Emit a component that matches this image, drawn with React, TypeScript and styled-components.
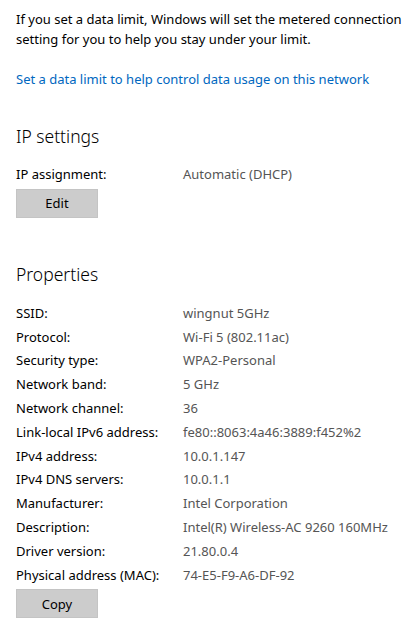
import React from "react";
import styled, { createGlobalStyle } from "styled-components";

const GlobalStyle = createGlobalStyle`
  html, body {
    margin: 0;
    padding: 0;
    background: #fff;
  }
  body {
    font-family: "Noto Sans", "Open Sans", sans-serif;
    color: #000;
    -webkit-font-smoothing: antialiased;
  }
`;

const Page = styled.div`
  padding: 9px 16px 20px;
  display: flex;
  flex-direction: column;
  align-items: flex-start;
`;

const Intro = styled.p`
  margin: 0;
  font-size: 13px;
  line-height: 20px;
`;

const Link = styled.a`
  margin-top: 20px;
  font-size: 13px;
  line-height: 20px;
  color: #0067c0;
  text-decoration: none;
  cursor: pointer;
`;

const Heading = styled.h2<{ $top: number }>`
  margin: ${(p) => p.$top}px 0 0;
  font-size: 17.5px;
  line-height: 28px;
  font-weight: 300;
`;

const List = styled.div<{ $top: number }>`
  margin-top: ${(p) => p.$top}px;
  display: flex;
  flex-direction: column;
  align-self: stretch;
`;

const Row = styled.div`
  display: grid;
  grid-template-columns: 167px 1fr;
  font-size: 13px;
  line-height: 23.8px;
  white-space: nowrap;
`;

const Label = styled.span`
  color: #000;
`;

const Value = styled.span`
  color: #555;
`;

const Button = styled.button`
  margin-top: 2px;
  width: 82px;
  height: 29px;
  background: #cccccc;
  border: 1px solid #c4c4c4;
  border-radius: 0;
  font-family: inherit;
  font-size: 13px;
  color: #000;
  padding: 0;
  cursor: pointer;
`;

const properties: [string, string][] = [
  ["SSID:", "wingnut 5GHz"],
  ["Protocol:", "Wi-Fi 5 (802.11ac)"],
  ["Security type:", "WPA2-Personal"],
  ["Network band:", "5 GHz"],
  ["Network channel:", "36"],
  ["Link-local IPv6 address:", "fe80::8063:4a46:3889:f452%2"],
  ["IPv4 address:", "10.0.1.147"],
  ["IPv4 DNS servers:", "10.0.1.1"],
  ["Manufacturer:", "Intel Corporation"],
  ["Description:", "Intel(R) Wireless-AC 9260 160MHz"],
  ["Driver version:", "21.80.0.4"],
  ["Physical address (MAC):", "74-E5-F9-A6-DF-92"],
];

const App = () => {
  return (
    <>
      <GlobalStyle />
      <Page>
        <Intro>
          If you set a data limit, Windows will set the metered connection
          <br />
          setting for you to help you stay under your limit.
        </Intro>
        <Link>Set a data limit to help control data usage on this network</Link>

        <Heading $top={33}>IP settings</Heading>
        <List $top={13}>
          <Row>
            <Label>IP assignment:</Label>
            <Value>Automatic (DHCP)</Value>
          </Row>
        </List>
        <Button>Edit</Button>

        <Heading $top={42}>Properties</Heading>
        <List $top={14}>
          {properties.map(([label, value]) => (
            <Row key={label}>
              <Label>{label}</Label>
              <Value>{value}</Value>
            </Row>
          ))}
        </List>
        <Button>Copy</Button>
      </Page>
    </>
  );
};

export default App;
